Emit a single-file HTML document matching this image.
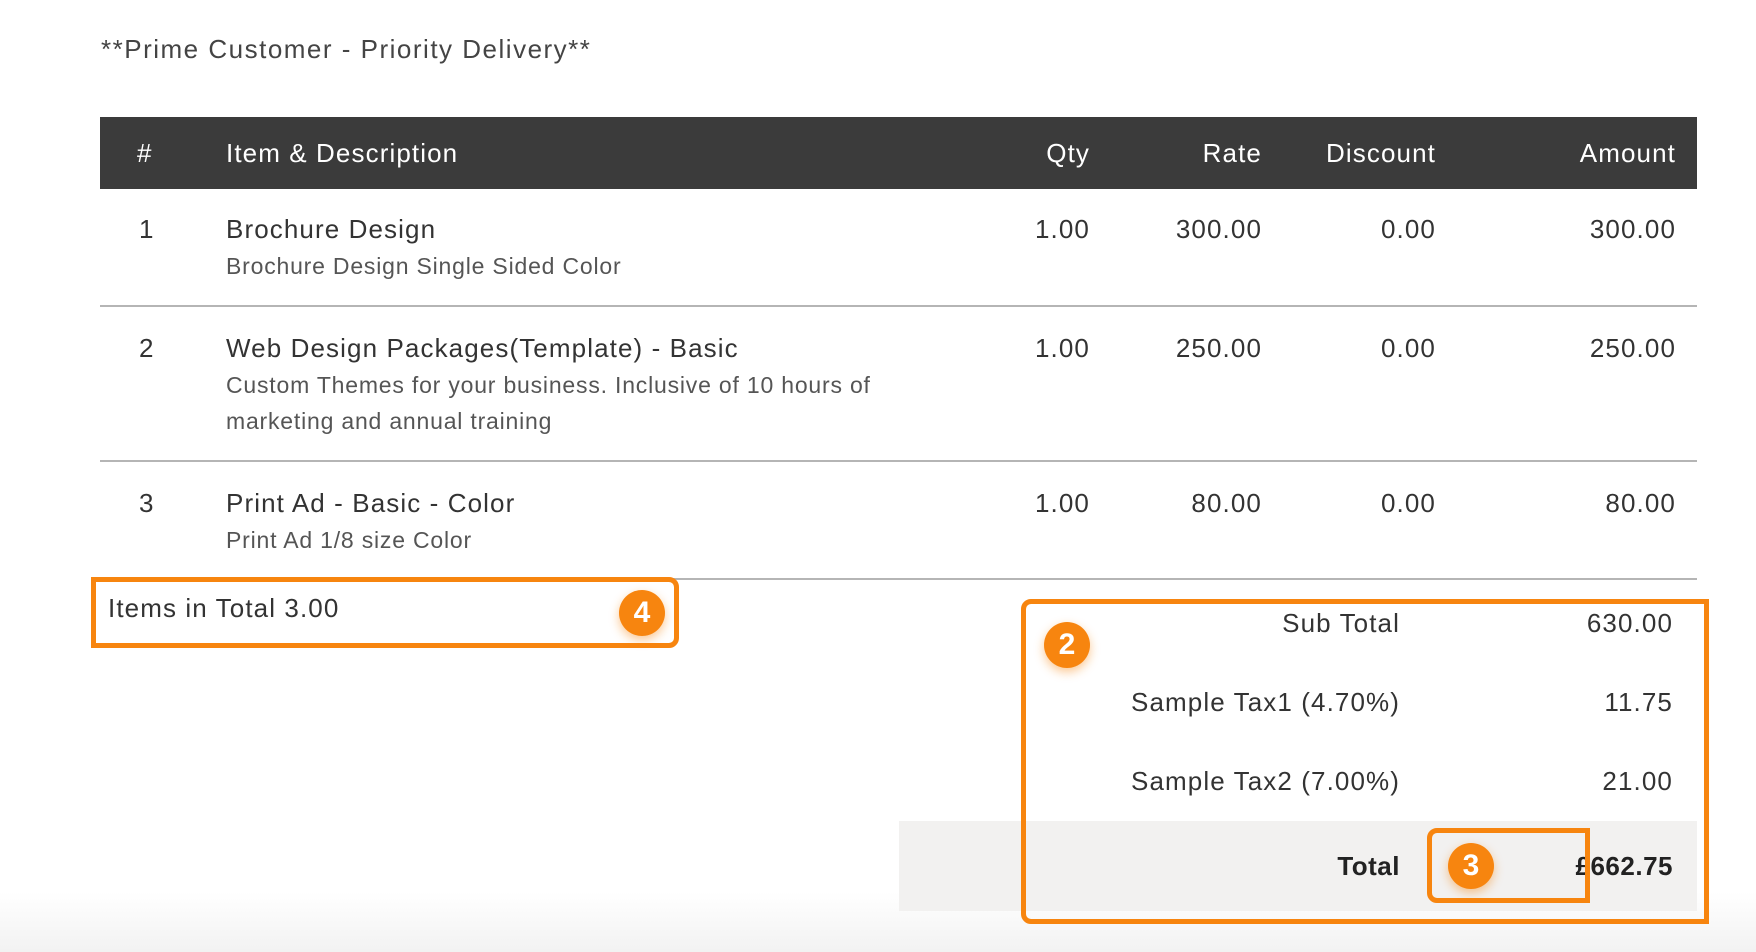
<!DOCTYPE html>
<html><head><meta charset="utf-8"><style>
*{margin:0;padding:0;box-sizing:border-box}
body{width:1756px;height:952px;position:relative;overflow:hidden;background:#fff;font-family:"Liberation Sans",sans-serif;color:#333}
.a{position:absolute;white-space:nowrap;line-height:1}
.m{font-size:26px;letter-spacing:1.1px;color:#333}
.d{font-size:23px;letter-spacing:0.8px;color:#555}
.r{text-align:right}
.hd{position:absolute;left:100px;top:117px;width:1597px;height:72px;background:#3b3b3b}
.hd .a{color:#fff;font-size:26px;letter-spacing:1.1px;top:23px}
.ln{position:absolute;left:100px;width:1597px;height:2px;background:#b5b5b5}
.badge{position:absolute;width:46px;height:46px;border-radius:50%;background:#f7850f;color:#fff;font-weight:bold;font-size:30px;text-align:center;line-height:46px;box-shadow:0 4px 10px rgba(247,133,15,.45)}
</style></head><body>
<div style="position:absolute;left:0;right:0;bottom:0;height:60px;background:linear-gradient(#fff,#f2f2f2)"></div>
<div class="a" style="left:101px;top:36px;font-size:26px;letter-spacing:1.5px;color:#444">**Prime Customer - Priority Delivery**</div>
<div class="hd">
<div class="a" style="left:37px">#</div>
<div class="a" style="left:126px">Item &amp; Description</div>
<div class="a r" style="right:607px">Qty</div>
<div class="a r" style="right:435px">Rate</div>
<div class="a r" style="right:261px">Discount</div>
<div class="a r" style="right:21px">Amount</div>
</div>

<div class="a m" style="left:139px;top:216px">1</div>
<div class="a m" style="left:226px;top:216px">Brochure Design</div>
<div class="a d" style="left:226px;top:255px">Brochure Design Single Sided Color</div>
<div class="a m r" style="right:666px;top:216px">1.00</div>
<div class="a m r" style="right:494px;top:216px">300.00</div>
<div class="a m r" style="right:320px;top:216px">0.00</div>
<div class="a m r" style="right:80px;top:216px">300.00</div>
<div class="ln" style="top:305px"></div>

<div class="a m" style="left:139px;top:335px">2</div>
<div class="a m" style="left:226px;top:335px">Web Design Packages(Template) - Basic</div>
<div class="a d" style="left:226px;top:374px">Custom Themes for your business. Inclusive of 10 hours of</div>
<div class="a d" style="left:226px;top:410px">marketing and annual training</div>
<div class="a m r" style="right:666px;top:335px">1.00</div>
<div class="a m r" style="right:494px;top:335px">250.00</div>
<div class="a m r" style="right:320px;top:335px">0.00</div>
<div class="a m r" style="right:80px;top:335px">250.00</div>
<div class="ln" style="top:460px"></div>

<div class="a m" style="left:139px;top:490px">3</div>
<div class="a m" style="left:226px;top:490px">Print Ad - Basic - Color</div>
<div class="a d" style="left:226px;top:529px">Print Ad 1/8 size Color</div>
<div class="a m r" style="right:666px;top:490px">1.00</div>
<div class="a m r" style="right:494px;top:490px">80.00</div>
<div class="a m r" style="right:320px;top:490px">0.00</div>
<div class="a m r" style="right:80px;top:490px">80.00</div>
<div class="ln" style="top:578px"></div>

<div class="a m" style="left:108px;top:595px">Items in Total 3.00</div>

<div style="position:absolute;left:899px;top:821px;width:798px;height:90px;background:#f2f1f0"></div>
<div class="a m r" style="right:356px;top:610px">Sub Total</div>
<div class="a m r" style="right:83px;top:610px">630.00</div>
<div class="a m r" style="right:356px;top:689px">Sample Tax1 (4.70%)</div>
<div class="a m r" style="right:83px;top:689px">11.75</div>
<div class="a m r" style="right:356px;top:768px">Sample Tax2 (7.00%)</div>
<div class="a m r" style="right:83px;top:768px">21.00</div>
<div class="a m r" style="right:356px;top:853px;font-weight:bold;color:#222;letter-spacing:0.5px">Total</div>
<div class="a m r" style="right:83px;top:853px;font-weight:bold;color:#222;letter-spacing:0.5px">£662.75</div>

<div style="position:absolute;left:91px;top:577px;width:588px;height:71px;border:5px solid #f7850f;border-radius:0 10px 10px 0"></div>
<div style="position:absolute;left:1021px;top:599px;width:688px;height:325px;border:5px solid #f7850f;border-radius:10px 0 0 10px"></div>
<div style="position:absolute;left:1427px;top:828px;width:163px;height:75px;border:5px solid #f7850f;border-radius:10px 0 0 10px"></div>
<div class="badge" style="left:619px;top:590px">4</div>
<div class="badge" style="left:1044px;top:622px">2</div>
<div class="badge" style="left:1448px;top:843px">3</div>
</body></html>
